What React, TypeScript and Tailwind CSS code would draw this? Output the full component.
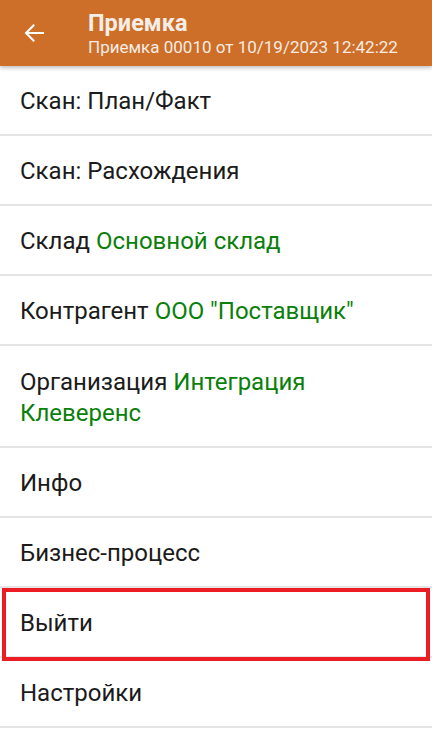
import React from "react";

type Row = {
  label: string;
  value?: string;
  tall?: boolean;
  marked?: boolean;
};

const rows: Row[] = [
  { label: "Скан: План/Факт" },
  { label: "Скан: Расхождения" },
  { label: "Склад", value: "Основной склад" },
  { label: "Контрагент", value: 'ООО "Поставщик"' },
  { label: "Организация", value: "Интеграция Клеверенс", tall: true },
  { label: "Инфо" },
  { label: "Бизнес-процесс" },
  { label: "Выйти", marked: true },
  { label: "Настройки" },
];

const App: React.FC = () => {
  return (
    <div
      className="w-[432px] h-[739px] bg-white overflow-hidden"
      style={{ fontFamily: "Roboto, 'Noto Sans', sans-serif" }}
    >
      {/* Toolbar */}
      <div className="relative z-10 h-[66px] bg-[#cd6f28] flex items-center shadow-[0_2px_4px_rgba(0,0,0,0.25)]">
        <div className="w-[88px] flex items-center pl-[24px]">
          <svg width="20" height="20" viewBox="0 0 20 20" fill="none">
            <path
              d="M19 10H2.5M9.5 2.5L2 10l7.5 7.5"
              stroke="#fff"
              strokeWidth="2"
              strokeLinecap="square"
            />
          </svg>
        </div>
        <div className="flex flex-col text-white">
          <span className="text-[23.5px] leading-[27px] font-bold text-[#f4ede8]">
            Приемка
          </span>
          <span className="text-[17px] leading-[20px] text-[#f6ece4]">
            Приемка 00010 от 10/19/2023 12:42:22
          </span>
        </div>
      </div>

      {/* Menu */}
      <div className="flex flex-col">
        {rows.map((r) => (
          <div
            key={r.label}
            className={`relative flex items-center pl-[20px] pr-[24px] pt-[3px] border-b-2 border-[#e5e5e5] text-[24px] leading-[31px] text-[#1b1b1b] ${
              r.tall ? "h-[102px]" : "h-[70px]"
            }`}
          >
            <p>
              {r.label}
              {r.value && (
                <>
                  {" "}
                  <span className="text-[#0a7f0a]">{r.value}</span>
                </>
              )}
            </p>
            {r.marked && (
              <div className="absolute left-[2px] right-[2px] top-0 h-[73px] border-4 border-[#ec1c24]" />
            )}
          </div>
        ))}
      </div>
    </div>
  );
};

export default App;
